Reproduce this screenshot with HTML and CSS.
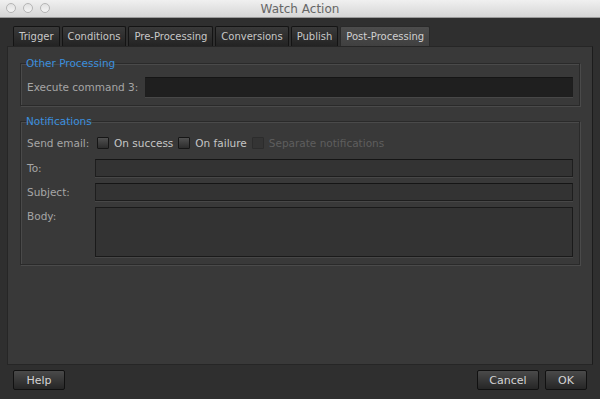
FILE: index.html
```html
<!DOCTYPE html>
<html lang="en">
  <head>
    <meta charset="UTF-8" />
    <title>Watch Action</title>
    <link rel="stylesheet" href="styles.css">
  </head>
  <body>
    <header class="titlebar">
      <div class="lights">
        <span class="light"></span>
        <span class="light"></span>
        <span class="light"></span>
      </div>
      <h1>Watch Action</h1>
    </header>

    <main class="dialog">
      <nav class="tabs">
        <button class="tab">Trigger</button>
        <button class="tab">Conditions</button>
        <button class="tab">Pre-Processing</button>
        <button class="tab">Conversions</button>
        <button class="tab">Publish</button>
        <button class="tab valgt">Post-Processing</button>
      </nav>

      <section class="panel">
        <fieldset class="group other">
          <legend>Other Processing</legend>
          <div class="row">
            <label class="lbl">Execute command 3:</label>
            <input class="field dark" type="text" />
          </div>
        </fieldset>

        <fieldset class="group notify">
          <legend>Notifications</legend>
          <div class="row email">
            <label class="lbl">Send email:</label>
            <span class="check"></span><span class="opt">On success</span>
            <span class="check"></span><span class="opt">On failure</span>
            <span class="check off"></span><span class="opt off">Separate notifications</span>
          </div>
          <div class="grid">
            <label class="lbl">To:</label>
            <input class="field" type="text" />
            <label class="lbl">Subject:</label>
            <input class="field" type="text" />
            <label class="lbl">Body:</label>
            <textarea class="field body"></textarea>
          </div>
        </fieldset>
      </section>

      <footer class="buttons">
        <button class="knap help">Help</button>
        <span class="spacer"></span>
        <button class="knap cancel">Cancel</button>
        <button class="knap ok">OK</button>
      </footer>
    </main>
  </body>
</html>
```

FILE: styles.css
```css
body {
  margin: 0;
  padding: 0;
  background-color: #2f2f2f;
  font-family: "DejaVu Sans", "Liberation Sans", sans-serif;
  font-size: 10.5px;
  color: #a9a9a9;
  width: 600px;
  height: 399px;
  overflow: hidden;
}

.titlebar {
  height: 17px;
  background: linear-gradient(#f0f0f0, #d6d6d6);
  border-bottom: 1px solid #9a9a9a;
  display: flex;
  align-items: center;
  justify-content: center;
  position: relative;
}
.titlebar h1 {
  margin: 0;
  font-size: 12px;
  font-weight: normal;
  color: #666666;
}
.lights {
  position: absolute;
  left: 6px;
  top: 3px;
  display: flex;
  gap: 7px;
}
.light {
  width: 10px;
  height: 10px;
  border-radius: 50%;
  border: 1px solid #b5b5b5;
  background: linear-gradient(#e2e2e2, #f4f4f4);
  box-sizing: border-box;
}

.dialog {
  padding: 8px 7px 0 7px;
}

.tabs {
  display: flex;
  gap: 2px;
  padding-left: 6px;
  height: 20px;
}
.tab {
  font-family: inherit;
  font-size: 10px;
  color: #c8c8c8;
  background: linear-gradient(#3a3a3a, #232323);
  border: 1px solid #141414;
  border-bottom: none;
  border-radius: 2px 2px 0 0;
  padding: 0 5px;
  height: 20px;
  margin: 0;
}
.tab.valgt {
  background: linear-gradient(#4c4c4c, #404040);
  border-color: #2a2a2a;
  color: #d0d0d0;
}

.panel {
  height: 307px;
  background-color: #393939;
  border: 1px solid #262626;
  border-right-color: #1c1c1c;
  padding: 10px 12px 0 12px;
  display: flex;
  flex-direction: column;
  gap: 9px;
}

.group {
  margin: 0;
  border: 1px solid #2a2a2a;
  box-shadow: 1px 1px 0 #4a4a4a, inset 1px 1px 0 #4a4a4a;
  padding: 0 6px 7px 6px;
  width: 546px;
}
.group legend {
  color: #3b8fde;
  padding: 0;
  margin-left: -1px;
  font-size: 10.5px;
}

.row {
  display: flex;
  align-items: center;
  gap: 7px;
}
.other {
  padding-bottom: 8px;
}
.other .row {
  padding-top: 8px;
}

.lbl {
  color: #a6a6a6;
}

.field {
  box-sizing: border-box;
  flex: 1;
  height: 18px;
  background-color: #333333;
  border: 1px solid #1e1e1e;
  border-top-color: #151515;
  box-shadow: 0 1px 0 #474747;
  margin: 0;
  padding: 0;
  font-family: inherit;
}
.field.dark {
  background-color: #1f1f1f;
  height: 20px;
}

.email {
  gap: 0;
  padding-top: 10px;
}
.email .lbl {
  width: 70px;
}
.check {
  width: 12px;
  height: 12px;
  box-sizing: border-box;
  border: 1px solid #161616;
  background: linear-gradient(#505050, #2c2c2c);
  border-radius: 1px;
  margin-right: 5px;
}
.check.off {
  background: #343434;
  border-color: #2c2c2c;
}
.opt {
  color: #c6c6c6;
  margin-right: 5px;
}
.opt.off {
  color: #5e5e5e;
  margin-left: 0;
}

.grid {
  display: grid;
  grid-template-columns: 68px 1fr;
  row-gap: 6px;
  padding-top: 10px;
}
.grid .lbl {
  line-height: 18px;
}
.body {
  height: 50px;
  resize: none;
  border-color: #1a1a1a;
}

.buttons {
  display: flex;
  align-items: center;
  padding: 5px 6px 0 6px;
  gap: 6px;
}
.spacer {
  flex: 1;
}
.knap {
  font-family: inherit;
  font-size: 11px;
  color: #d4d4d4;
  height: 20px;
  background: linear-gradient(#4a4a4a, #262626);
  border: 1px solid #111111;
  border-radius: 2px;
  padding: 0;
  margin: 0;
}
.help {
  width: 52px;
}
.cancel {
  width: 62px;
}
.ok {
  width: 42px;
}
```
